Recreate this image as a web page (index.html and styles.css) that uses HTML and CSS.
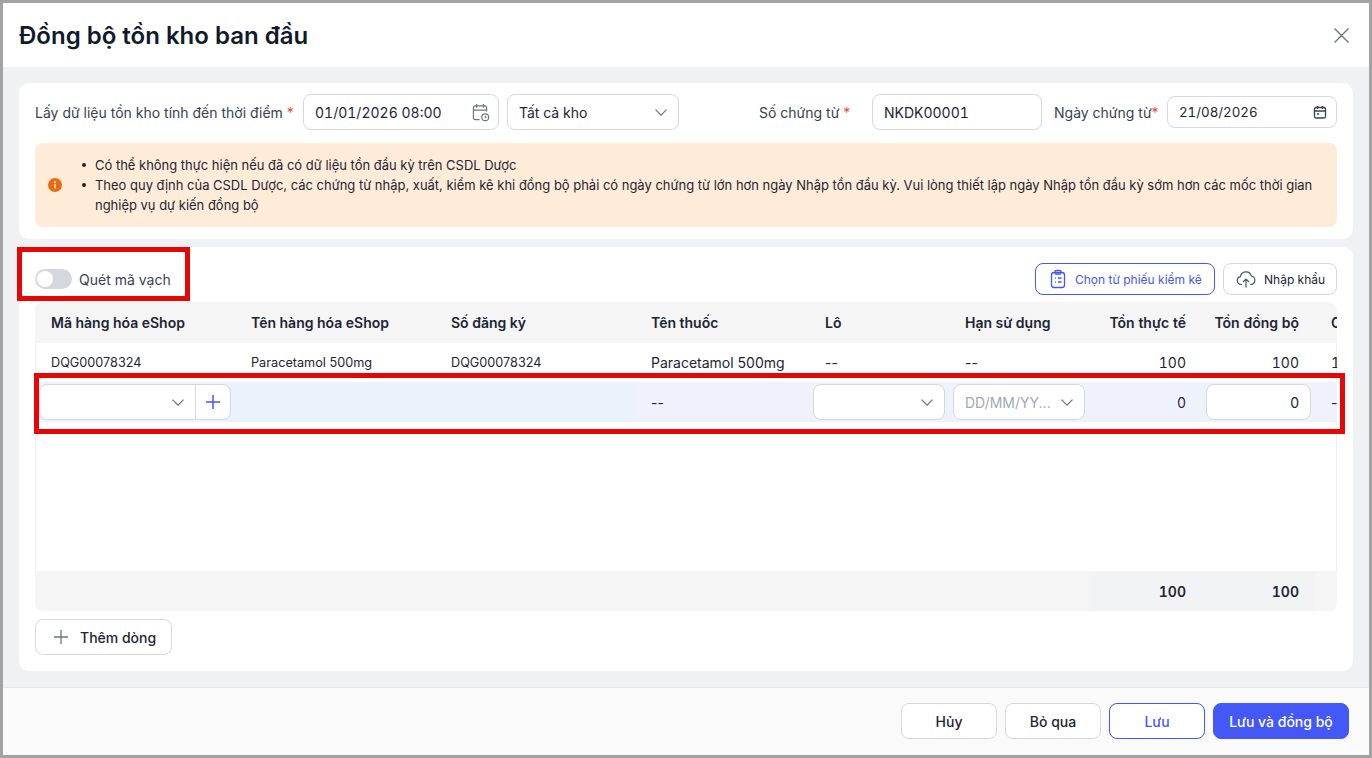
FILE: index.html
```html
<!DOCTYPE html>
<html lang="vi">
<head>
  <meta charset="UTF-8" />
  <meta name="viewport" content="width=device-width, initial-scale=1.0"/>
  <title>Đồng bộ tồn kho ban đầu</title>
  <link rel="stylesheet" href="styles.css">
</head>
<body>

  <div class="modal">
    <header class="modal-head">
      <h1>Đồng bộ tồn kho ban đầu</h1>
      <svg class="close" viewBox="0 0 14 14"><path d="M.5.5l13 13M13.500.5l-13 13"/></svg>
    </header>

    <main class="modal-body">
      <section class="card card-top">
        <div class="form-row">
          <label class="label label-long">Lấy dữ liệu tồn kho tính đến thời điểm <span class="req">*</span></label>
          <div class="field w-196">
            <span class="val">01/01/2026 08:00</span>
            <svg class="ico-18" viewBox="0 0 20 20"><path d="M9 17.500H4.500a2 2 0 0 1-2-2V5a2 2 0 0 1 2-2h10a2 2 0 0 1 2 2v4M2.500 7.500h14M6 1v4M13 1v4"/><circle cx="15" cy="15" r="3.600"/><path d="M15 13.300V15l1.200.8"/></svg>
          </div>
          <div class="field w-172">
            <span class="val">Tất cả kho</span>
            <svg class="chev" viewBox="0 0 12 7"><path d="M.5.7L6 6.200 11.500.7"/></svg>
          </div>
          <div class="form-right">
            <label class="label label-so">Số chứng từ <span class="req">*</span></label>
            <div class="field w-170"><span class="val">NKDK00001</span></div>
            <label class="label label-ngay">Ngày chứng từ<span class="req">*</span></label>
            <div class="field field-date w-170">
              <span class="val val-xs">21/08/2026</span>
              <svg class="ico-14" viewBox="0 0 14 14"><rect x="1.500" y="2.500" width="11" height="10.500" rx="1.500"/><path d="M1.500 6h11M4.500 1v3M9.500 1v3M4 9h2"/></svg>
            </div>
          </div>
        </div>

        <div class="alert">
          <svg class="alert-ico" viewBox="0 0 14 14"><circle cx="7" cy="7" r="7"/><rect class="alert-i" x="6.200" y="6.200" width="1.600" height="4.200" rx=".6"/><circle class="alert-i" cx="7" cy="4.200" r=".95"/></svg>
          <ul>
            <li>Có thể không thực hiện nếu đã có dữ liệu tồn đầu kỳ trên CSDL Dược</li>
            <li>Theo quy định của CSDL Dược, các chứng từ nhập, xuất, kiểm kê khi đồng bộ phải có ngày chứng từ lớn hơn ngày Nhập tồn đầu kỳ. Vui lòng thiết lập ngày Nhập tồn đầu kỳ sớm hơn các mốc thời gian nghiệp vụ dự kiến đồng bộ</li>
          </ul>
        </div>
      </section>

      <section class="card card-main">
        <div class="toolbar">
          <div class="scan">
            <span class="toggle"><span class="knob"></span></span>
            <span>Quét mã vạch</span>
          </div>
          <div class="tools">
            <button class="btn-sm btn-sm-blue">
              <svg class="ico-20" viewBox="0 0 20 20"><rect x="3.500" y="3.500" width="13" height="15" rx="2.500"/><rect x="7" y="1.500" width="6" height="3.500" rx="1"/><path d="M7 9h.8M10 9h3.500M7 13h.8M10 13h3.500"/></svg>
              Chọn từ phiếu kiểm kê
            </button>
            <button class="btn-sm btn-sm-import">
              <svg class="ico-cloud" viewBox="0 0 20 20"><path d="M6 15.500H5a4 4 0 0 1-.6-7.900 5.600 5.600 0 0 1 10.900-.6A4.300 4.300 0 0 1 15 15.500h-1M10 18.500V10.500M7 13l3-3 3 3"/></svg>
              Nhập khẩu
            </button>
          </div>
        </div>

        <div class="grid">
          <div class="row row-head">
            <div>Mã hàng hóa eShop</div>
            <div>Tên hàng hóa eShop</div>
            <div>Số đăng ký</div>
            <div>Tên thuốc</div>
            <div>Lô</div>
            <div>Hạn sử dụng</div>
            <div class="num">Tồn thực tế</div>
            <div class="num">Tồn đồng bộ</div>
            <div>Chênh lệch</div>
          </div>

          <div class="grid-body">
            <div class="row row-data">
              <div class="small">DQG00078324</div>
              <div class="small">Paracetamol 500mg</div>
              <div class="small">DQG00078324</div>
              <div>Paracetamol 500mg</div>
              <div>--</div>
              <div>--</div>
              <div class="num">100</div>
              <div class="num">100</div>
              <div>100</div>
            </div>

            <div class="row row-edit">
              <div class="cell-combo">
                <div class="combo">
                  <span class="combo-main"><svg class="chev" viewBox="0 0 12 7"><path d="M.5.7L6 6.200 11.500.7"/></svg></span>
                  <span class="combo-add"><svg class="plus" viewBox="0 0 14 14"><path d="M7 0v14M0 7h14"/></svg></span>
                </div>
              </div>
              <div class="cell-blue"></div>
              <div class="cell-blue"></div>
              <div>--</div>
              <div class="cell-input">
                <div class="mini"><svg class="chev" viewBox="0 0 12 7"><path d="M.5.7L6 6.200 11.500.7"/></svg></div>
              </div>
              <div class="cell-input">
                <div class="mini"><span class="ph">DD/MM/YY...</span><svg class="chev" viewBox="0 0 12 7"><path d="M.5.7L6 6.200 11.500.7"/></svg></div>
              </div>
              <div class="num">0</div>
              <div class="cell-input">
                <div class="mini">0</div>
              </div>
              <div>--</div>
            </div>
          </div>

          <div class="row row-foot">
            <div></div><div></div><div></div><div></div><div></div><div></div>
            <div class="num sum">100</div>
            <div class="num sum">100</div>
            <div></div>
          </div>
        </div>

        <button class="btn-add">
          <svg class="plus-gray" viewBox="0 0 14 14"><path d="M7 0v14M0 7h14"/></svg>
          Thêm dòng
        </button>
      </section>
    </main>

    <footer class="modal-foot">
      <button class="btn">Hủy</button>
      <button class="btn">Bỏ qua</button>
      <button class="btn btn-outline">Lưu</button>
      <button class="btn btn-primary">Lưu và đồng bộ</button>
    </footer>
  </div>

  <div class="mark mark-scan"></div>
  <div class="mark mark-row"></div>

</body>
</html>
```

FILE: styles.css
```css
* {
  box-sizing: border-box;
}
html, body {
  height: 100%;
}
body {
  margin: 0;
  padding: 3px;
  background-color: #a3a3a3;
  font-family: Inter, "Noto Sans", sans-serif;
  font-size: 14px;
  color: #1d2433;
  overflow: hidden;
  position: relative;
}
svg {
  fill: none;
  stroke: currentColor;
  flex: none;
}
button {
  font-family: inherit;
  cursor: pointer;
  white-space: nowrap;
}

.modal {
  height: 752px;
  display: flex;
  flex-direction: column;
  background-color: #f0f1f3;
}
.modal-head {
  height: 64px;
  padding: 0 20px 0 16px;
  background-color: #fff;
  display: flex;
  align-items: center;
  justify-content: space-between;
}
.modal-head h1 {
  margin: 0;
  font-size: 24px;
  font-weight: 600;
  color: #111a2c;
}
.close {
  width: 15px;
  height: 15px;
  color: #6b7280;
  stroke-width: 1.2;
}
.modal-body {
  flex: 1;
  padding: 16px;
  display: flex;
  flex-direction: column;
  gap: 8px;
}
.card {
  background-color: #fff;
  border-radius: 10px;
  padding: 0 16px;
}
.card-top {
  height: 156px;
  padding-top: 11px;
}
.card-main {
  flex: 1;
  padding-top: 16px;
}

.form-row {
  display: flex;
  align-items: center;
  height: 36px;
  gap: 8px;
}
.form-right {
  margin-left: auto;
  display: flex;
  align-items: center;
}
.label {
  color: #374151;
  white-space: nowrap;
}
.label-long { width: 260px; }
.label-so { width: 113px; }
.label-ngay { width: 113px; margin-left: 12px; }
.req { color: #f04438; }
.field {
  height: 36px;
  border: 1px solid #d5d7dc;
  border-radius: 8px;
  background-color: #fff;
  padding: 0 11px;
  display: flex;
  align-items: center;
  justify-content: space-between;
}
.field-date {
  height: 32px;
}
.w-196 { width: 196px; }
.w-172 { width: 172px; }
.w-170 { width: 170px; }
.val {
  color: #1d2433;
  font-variant-numeric: tabular-nums;
}
.val-xs {
  font-size: 13.300px;
}
.ico-18 {
  width: 19px;
  height: 19px;
  color: #6b7280;
  stroke-width: 1.200;
  margin-right: -3px;
}
.ico-14 {
  width: 14px;
  height: 14px;
  color: #374151;
  stroke-width: 1.300;
  margin-right: -2px;
}
.chev {
  width: 12px;
  height: 7px;
  color: #6b7280;
  stroke-width: 1.200;
}

.alert {
  margin-top: 13px;
  height: 84px;
  padding: 0 16px 0 13px;
  border-radius: 8px;
  background-color: #feecd8;
  display: flex;
  align-items: center;
}
.alert-ico {
  width: 14px;
  height: 14px;
  stroke: none;
  fill: #ea6a12;
}
.alert-i {
  fill: #fff;
}
.alert ul {
  margin: 0 0 0 33px;
  padding: 0;
  list-style: none;
  font-size: 12.980px;
  line-height: 20px;
  color: #1d2433;
}
.alert li {
  position: relative;
}
.alert li:before {
  content: "";
  position: absolute;
  left: -13px;
  top: 8px;
  width: 4px;
  height: 4px;
  border-radius: 50%;
  background-color: #1d2433;
}

.toolbar {
  height: 32px;
  margin-bottom: 7px;
  display: flex;
  align-items: center;
  justify-content: space-between;
}
.scan {
  display: flex;
  align-items: center;
  gap: 7px;
  color: #374151;
}
.toggle {
  width: 37px;
  height: 20px;
  border-radius: 10px;
  background-color: #d4d7dd;
  padding: 2px;
  display: block;
}
.knob {
  display: block;
  width: 16px;
  height: 16px;
  border-radius: 50%;
  background-color: #fff;
}
.tools {
  display: flex;
  gap: 8px;
}
.btn-sm {
  height: 32px;
  padding: 0 11px;
  border: 1px solid #d5d7dc;
  border-radius: 8px;
  background-color: #fff;
  font-size: 12px;
  color: #1d2433;
  display: flex;
  align-items: center;
  gap: 7px;
}
.btn-sm-blue {
  width: 180px;
  border-color: #4358f6;
  color: #4358f6;
  padding: 0 11px 0 12px;
}
.btn-sm-import {
  width: 114px;
  padding: 0 12px;
  gap: 8px;
}
.ico-20 {
  width: 20px;
  height: 20px;
  stroke-width: 1.300;
}
.ico-cloud {
  width: 20px;
  height: 20px;
  color: #4b5563;
  stroke-width: 1.200;
}

.grid {
  height: 309px;
  border-radius: 8px;
  overflow: hidden;
  background-color: #f5f5f6;
  display: flex;
  flex-direction: column;
}
.grid-body {
  flex: 1;
  background-color: #fff;
  border-left: 1px solid #eceef0;
  border-right: 1px solid #eceef0;
}
.row {
  display: grid;
  grid-template-columns: 200px 200px 200px 174px 140px 140px 113px 113px 120px;
  width: 1400px;
}
.row > div {
  padding: 0 16px;
  display: flex;
  align-items: center;
  white-space: nowrap;
}
.row > .num {
  justify-content: flex-end;
  font-variant-numeric: tabular-nums;
}
.row-head {
  height: 41px;
  font-weight: 600;
  color: #1d2433;
}
.row-data {
  height: 39px;
  margin-left: -1px;
}
.row-data > div:last-child {
  font-variant-numeric: tabular-nums;
}
.row > .small {
  font-size: 12.700px;
}
.row-edit {
  height: 40px;
  margin-left: -1px;
  background-color: #eff2fb;
}
.row-edit > .cell-blue,
.row-edit > .cell-combo {
  background-color: #ebf2fc;
}
.row-edit > .cell-combo {
  padding: 0 0 0 4px;
}
.row-edit > .cell-input {
  padding: 0 4px;
}
.combo {
  width: 192px;
  height: 36px;
  border: 1px solid #d5d7dc;
  border-radius: 8px;
  background-color: #fff;
  display: flex;
}
.combo-main {
  flex: 1;
  display: flex;
  align-items: center;
  justify-content: flex-end;
  padding-right: 11px;
}
.combo-add {
  width: 35px;
  border-left: 1px solid #d5d7dc;
  display: flex;
  align-items: center;
  justify-content: center;
}
.plus {
  width: 14px;
  height: 14px;
  color: #4358f6;
  stroke-width: 1.500;
}
.mini {
  flex: 1;
  height: 36px;
  border: 1px solid #d5d7dc;
  border-radius: 8px;
  background-color: #fff;
  padding: 0 11px;
  display: flex;
  align-items: center;
  justify-content: flex-end;
  gap: 6px;
}
.ph {
  flex: 1;
  color: #a4a9b3;
}
.row-foot {
  height: 40px;
  font-weight: 600;
}
.row-foot > .sum {
  background-color: #f2f3f5;
}

.btn-add {
  margin-top: 8px;
  width: 137px;
  height: 36px;
  padding: 0 0 0 18px;
  border: 1px solid #d5d7dc;
  border-radius: 8px;
  background-color: #fff;
  font-size: 14px;
  font-weight: 500;
  color: #1d2433;
  display: flex;
  align-items: center;
  gap: 12px;
}
.plus-gray {
  width: 14px;
  height: 14px;
  color: #6b7280;
  stroke-width: 1.300;
}

.modal-foot {
  height: 68px;
  padding: 15px 20px 16px 0;
  background-color: #fafafa;
  border-top: 1px solid #e6e7ea;
  display: flex;
  justify-content: flex-end;
  gap: 8px;
}
.btn {
  width: 96px;
  height: 36px;
  border: 1px solid #d5d7dc;
  border-radius: 8px;
  background-color: #fff;
  font-size: 14px;
  font-weight: 500;
  color: #1d2433;
}
.btn-outline {
  border-color: #4358f6;
  color: #4358f6;
}
.btn-primary {
  width: 136px;
  border-color: #4358f6;
  background-color: #4358f6;
  color: #fff;
}

/* red annotations over the screenshot */
.mark {
  position: absolute;
  border: 5px solid #e60606;
  pointer-events: none;
}
.mark-scan {
  left: 17px;
  top: 247px;
  width: 173px;
  height: 54px;
}
.mark-row {
  left: 34px;
  top: 373px;
  width: 1311px;
  height: 61px;
}
```
